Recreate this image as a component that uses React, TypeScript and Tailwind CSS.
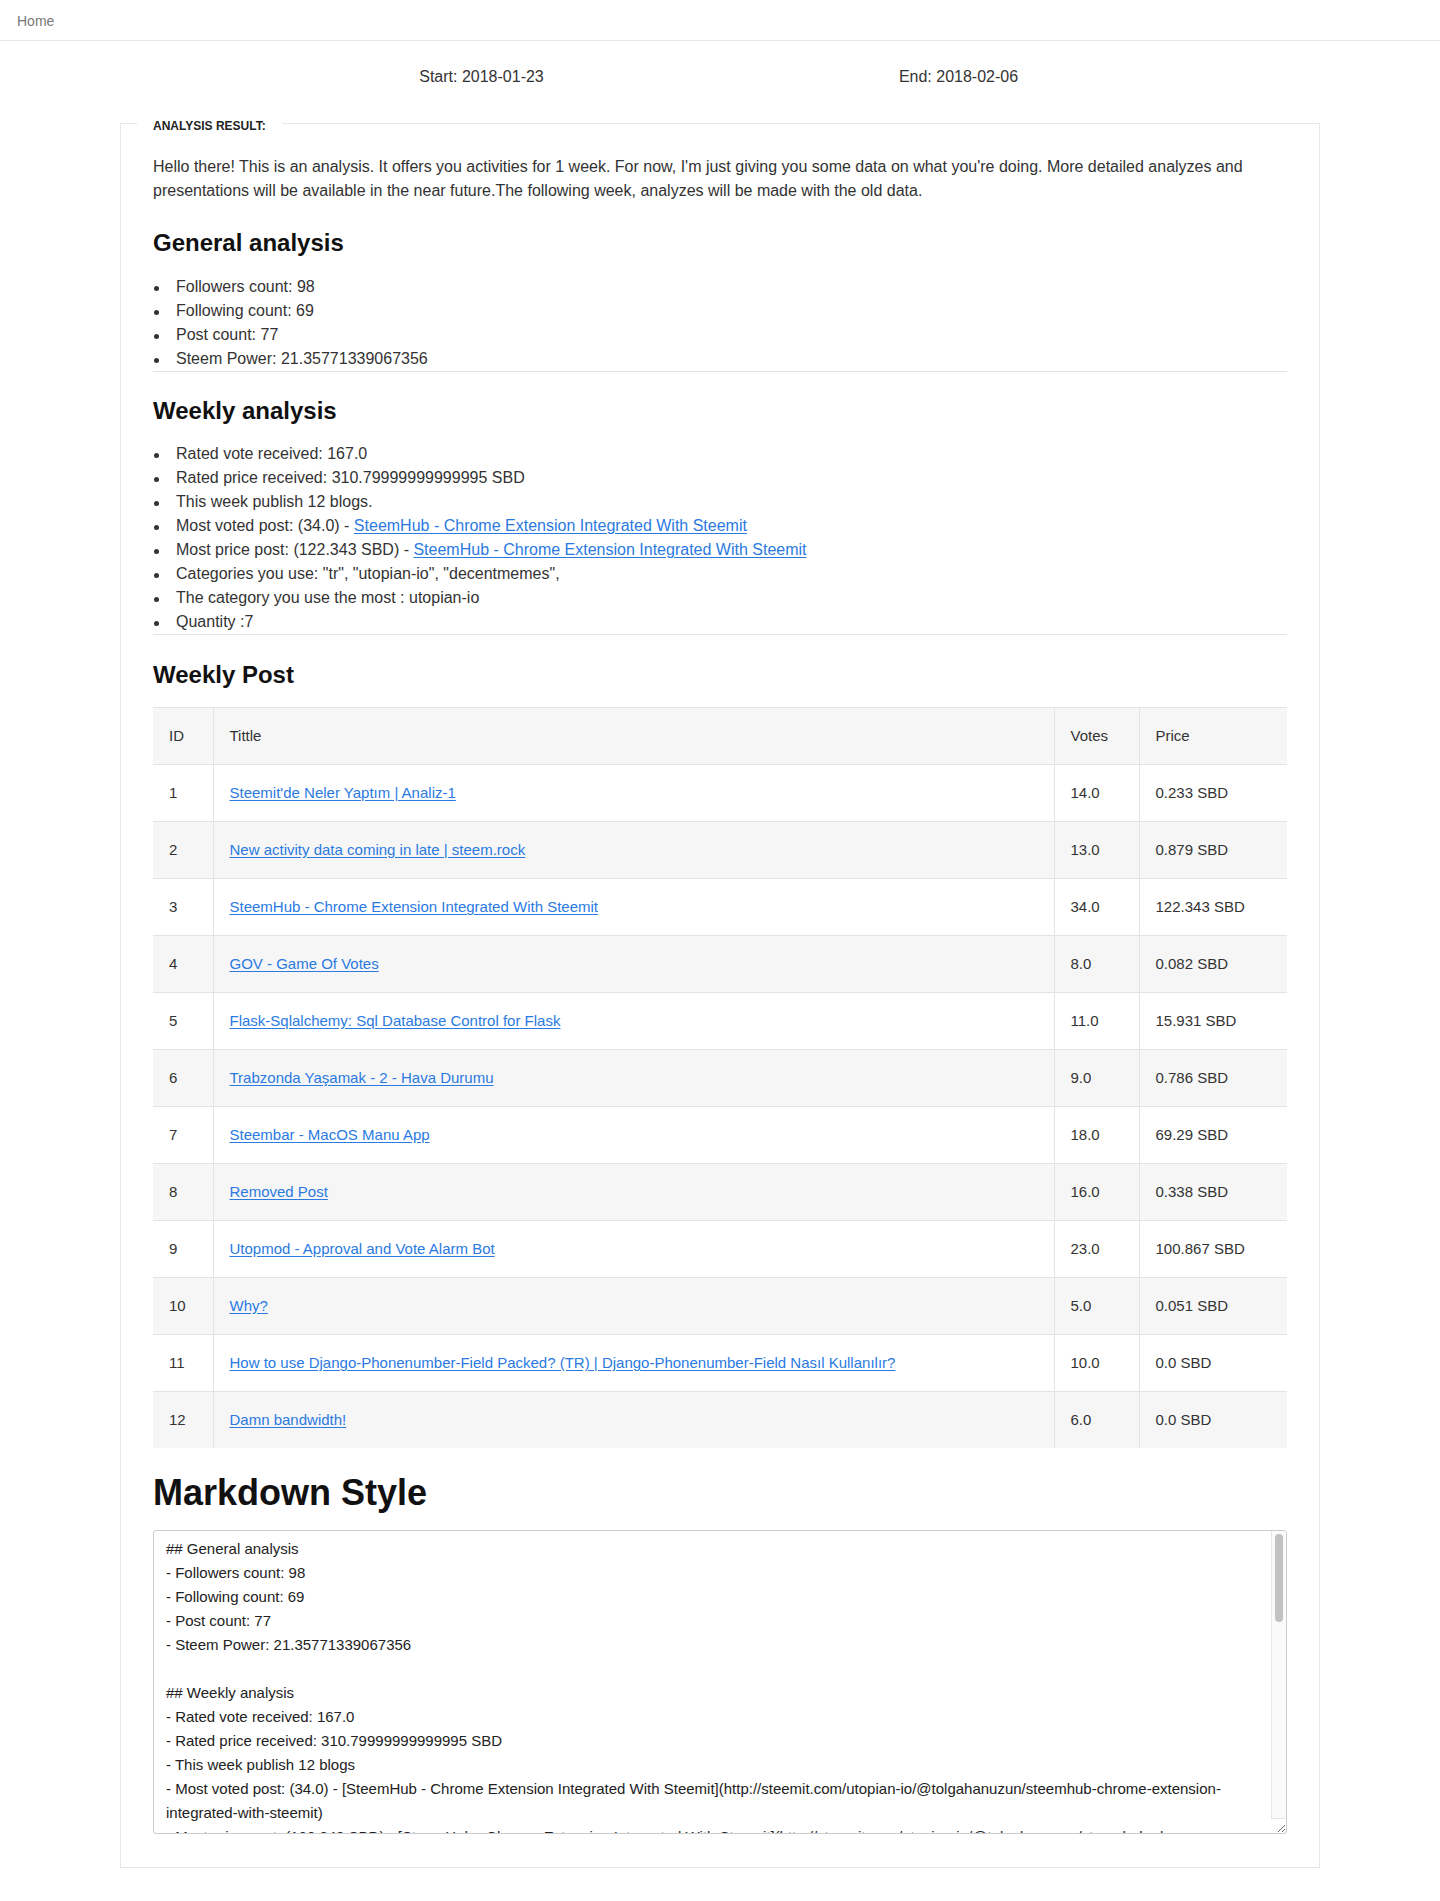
import React from 'react'

const FONT = "font-['Liberation_Sans','Helvetica_Neue',Arial,sans-serif]"

type Post = { id: number; title: string; votes: string; price: string }

const posts: Post[] = [
  { id: 1, title: "Steemit'de Neler Yaptım | Analiz-1", votes: '14.0', price: '0.233 SBD' },
  { id: 2, title: 'New activity data coming in late | steem.rock', votes: '13.0', price: '0.879 SBD' },
  { id: 3, title: 'SteemHub - Chrome Extension Integrated With Steemit', votes: '34.0', price: '122.343 SBD' },
  { id: 4, title: 'GOV - Game Of Votes', votes: '8.0', price: '0.082 SBD' },
  { id: 5, title: 'Flask-Sqlalchemy: Sql Database Control for Flask', votes: '11.0', price: '15.931 SBD' },
  { id: 6, title: 'Trabzonda Yaşamak - 2 - Hava Durumu', votes: '9.0', price: '0.786 SBD' },
  { id: 7, title: 'Steembar - MacOS Manu App', votes: '18.0', price: '69.29 SBD' },
  { id: 8, title: 'Removed Post', votes: '16.0', price: '0.338 SBD' },
  { id: 9, title: 'Utopmod - Approval and Vote Alarm Bot', votes: '23.0', price: '100.867 SBD' },
  { id: 10, title: 'Why?', votes: '5.0', price: '0.051 SBD' },
  {
    id: 11,
    title: 'How to use Django-Phonenumber-Field Packed? (TR) | Django-Phonenumber-Field Nasıl Kullanılır?',
    votes: '10.0',
    price: '0.0 SBD',
  },
  { id: 12, title: 'Damn bandwidth!', votes: '6.0', price: '0.0 SBD' },
]

const STEEMHUB = 'SteemHub - Chrome Extension Integrated With Steemit'
const STEEMHUB_URL = 'http://steemit.com/utopian-io/@tolgahanuzun/steemhub-chrome-extension-integrated-with-steemit'

const markdown = [
  '## General analysis',
  '- Followers count: 98',
  '- Following count: 69',
  '- Post count: 77',
  '- Steem Power: 21.35771339067356',
  '',
  '## Weekly analysis',
  '- Rated vote received: 167.0',
  '- Rated price received: 310.79999999999995 SBD',
  '- This week publish 12 blogs',
  `- Most voted post: (34.0) - [${STEEMHUB}](${STEEMHUB_URL})`,
  `- Most price post: (122.343 SBD) - [${STEEMHUB}](${STEEMHUB_URL})`,
  '- Categories you use: "tr", "utopian-io", "decentmemes",',
  '- The category you use the most : utopian-io',
  '- Quantity :7',
  '',
  '## Weekly Post',
  '',
  '| ID | Tittle | Votes | Price |',
  '| --- | --- | --- | --- |',
  ...posts.map((p) => `| ${p.id} | [${p.title}](http://steemit.com/@tolgahanuzun) | ${p.votes} | ${p.price} |`),
  '',
  'Analysis by steem.rock',
].join('\n')

function Link({ children }: { children: React.ReactNode }): React.JSX.Element {
  return (
    <a href="#" className="text-[#2a7ae2] underline underline-offset-[2px]">
      {children}
    </a>
  )
}

// ─── Sections ─────────────────────────────────────────────────────────────────

function Heading({ children, className = '' }: { children: React.ReactNode; className?: string }): React.JSX.Element {
  return <h3 className={`text-[24px] font-bold leading-[26px] text-[#111] ${className}`}>{children}</h3>
}

function Bullets({ items }: { items: React.ReactNode[] }): React.JSX.Element {
  return (
    <ul className="leading-6">
      {items.map((item, i) => (
        <li key={i} className="flex">
          <span className="flex h-6 w-[23px] shrink-0 items-center pt-[2px] pl-[1px]">
            <span className="h-[5px] w-[5px] rounded-full bg-[#333]" />
          </span>
          <span>{item}</span>
        </li>
      ))}
    </ul>
  )
}

function PostTable(): React.JSX.Element {
  const cell = 'px-4 py-[18px] leading-5 text-left font-normal'
  return (
    <table className="w-full table-fixed border-collapse text-[15px] text-[#333]">
      <colgroup>
        <col className="w-[60px]" />
        <col />
        <col className="w-[85px]" />
        <col className="w-[148px]" />
      </colgroup>
      <thead>
        <tr className="bg-[#f6f6f6] border-t border-[#e4e4e4]">
          <th className={cell}>ID</th>
          <th className={`${cell} border-l border-[#e4e4e4]`}>Tittle</th>
          <th className={`${cell} border-l border-[#e4e4e4]`}>Votes</th>
          <th className={`${cell} border-l border-[#e4e4e4]`}>Price</th>
        </tr>
      </thead>
      <tbody>
        {posts.map((p) => (
          <tr key={p.id} className={`border-t border-[#e4e4e4] ${p.id % 2 === 0 ? 'bg-[#f6f6f6]' : 'bg-white'}`}>
            <td className={cell}>{p.id}</td>
            <td className={`${cell} border-l border-[#e4e4e4] truncate`}>
              <Link>{p.title}</Link>
            </td>
            <td className={`${cell} border-l border-[#e4e4e4]`}>{p.votes}</td>
            <td className={`${cell} border-l border-[#e4e4e4]`}>{p.price}</td>
          </tr>
        ))}
      </tbody>
    </table>
  )
}

function MarkdownBox(): React.JSX.Element {
  return (
    <div className="relative">
      <textarea
        readOnly
        defaultValue={markdown}
        className="block h-[304px] w-full resize-y rounded-[3px] border border-[#cdcdcd] px-3 py-[6px] text-[15px] leading-6 text-[#222] outline-none"
      />
      {/* scrollbar (headless screenshots hide the native one) */}
      <div className="pointer-events-none absolute top-px right-px bottom-[15px] w-[15px] rounded-tr-[2px] border-l border-b border-[#e6e6e6] bg-[#fafafa]">
        <div className="mx-auto mt-[3px] h-[88px] w-[8px] rounded-full bg-[#c2c2c2]" />
      </div>
    </div>
  )
}

export default function App(): React.JSX.Element {
  return (
    <div className={`${FONT} min-h-[1901px] bg-white text-[16px] text-[#333]`}>
      <nav className="flex h-[41px] items-center border-b border-[#e7e7e7] px-[17px] pt-[2px] text-[14px] text-[#777]">
        Home
      </nav>

      <div className="mx-auto mt-[24px] grid w-[954px] grid-cols-2 text-center leading-6">
        <div>Start: 2018-01-23</div>
        <div>End: 2018-02-06</div>
      </div>

      <fieldset className="mx-auto mt-[23px] mb-[34px] w-[1200px] border border-[#e6e6e6] px-8 pt-[21px] pb-[33px]">
        <legend className="-ml-4 px-4 pt-[6px] text-[12px] font-bold leading-4 text-[#222]">ANALYSIS RESULT:</legend>

        <p className="leading-6">
          Hello there! This is an analysis. It offers you activities for 1 week. For now, I&apos;m just giving you
          some data on what you&apos;re doing. More detailed analyzes and presentations will be available in the near
          future.The following week, analyzes will be made with the old data.
        </p>

        <Heading className="mt-[27px] mb-[19px]">General analysis</Heading>
        <Bullets
          items={['Followers count: 98', 'Following count: 69', 'Post count: 77', 'Steem Power: 21.35771339067356']}
        />
        <hr className="border-[#e4e4e4]" />

        <Heading className="mt-[26px] mb-[18px]">Weekly analysis</Heading>
        <Bullets
          items={[
            'Rated vote received: 167.0',
            'Rated price received: 310.79999999999995 SBD',
            'This week publish 12 blogs.',
            <>
              Most voted post: (34.0) - <Link>{STEEMHUB}</Link>
            </>,
            <>
              Most price post: (122.343 SBD) - <Link>{STEEMHUB}</Link>
            </>,
            'Categories you use: "tr", "utopian-io", "decentmemes",',
            'The category you use the most : utopian-io',
            'Quantity :7',
          ]}
        />
        <hr className="border-[#e4e4e4]" />

        <Heading className="mt-[27px] mb-[19px]">Weekly Post</Heading>
        <PostTable />

        <h1 className="mt-[25px] mb-[17px] text-[36px] font-bold leading-[40px] text-[#111]">Markdown Style</h1>
        <MarkdownBox />
      </fieldset>
    </div>
  )
}
